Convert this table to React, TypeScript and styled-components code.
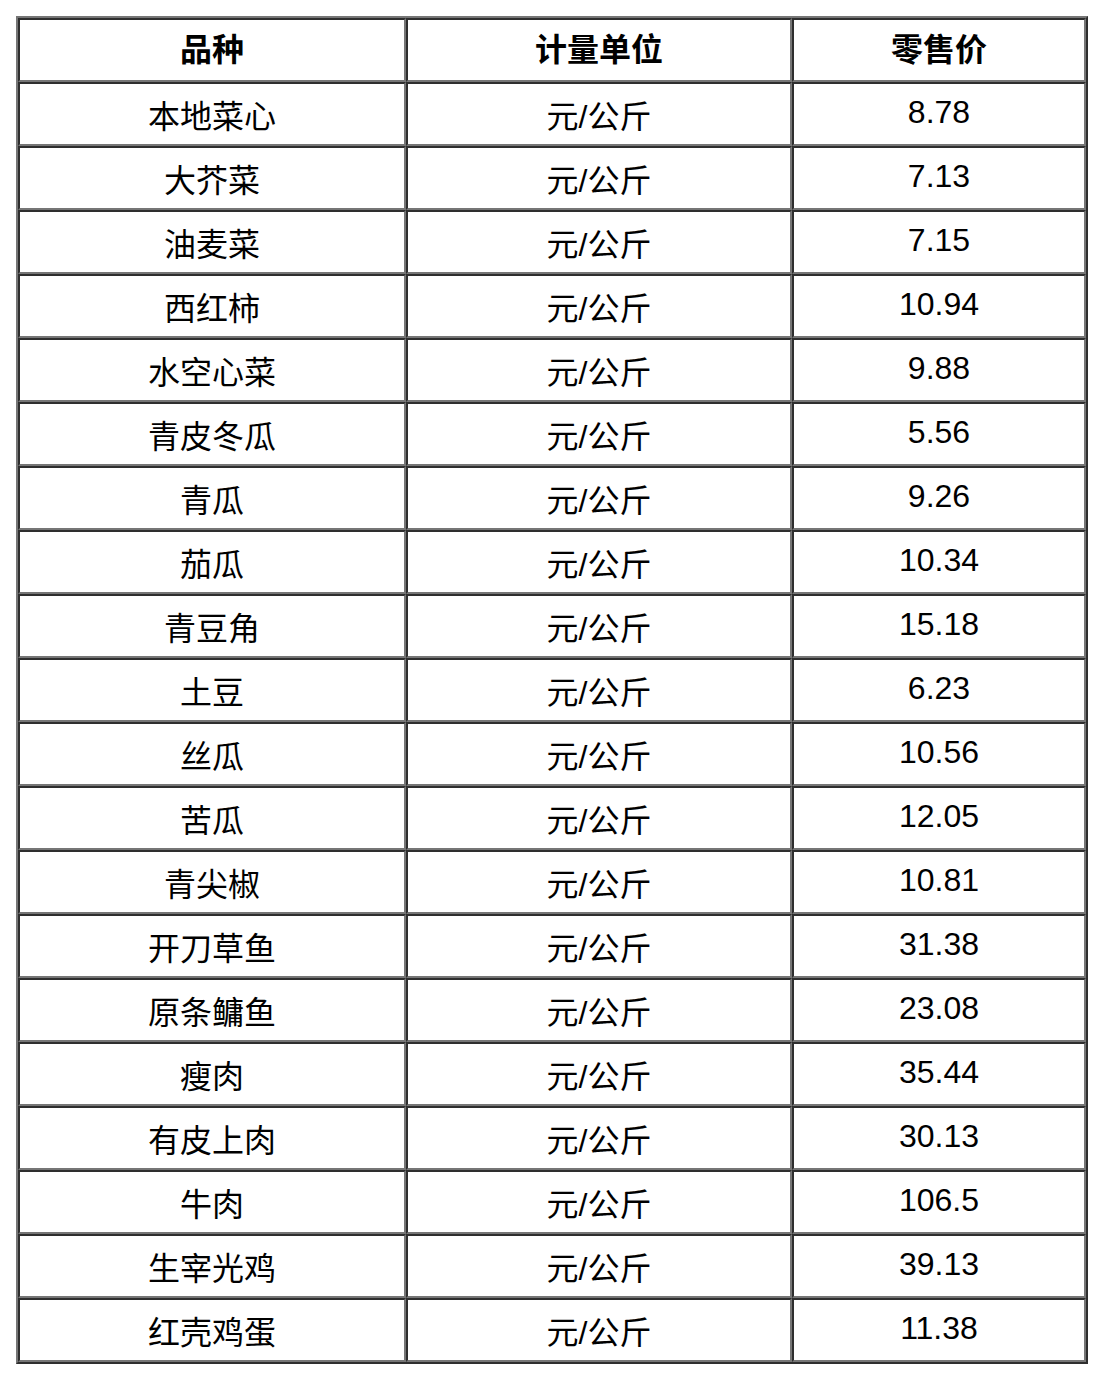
import React from "react";
import styled, { createGlobalStyle } from "styled-components";

const Global = createGlobalStyle`
  html, body { margin: 0; padding: 0; background: #fff; }
  body { padding: 16px; font-family: "Liberation Sans", "Noto Sans CJK SC", sans-serif; }
`;

const Table = styled.table`
  border-collapse: separate;
  border-spacing: 0;
  width: 1072px;
  border-style: solid;
  border-width: 2px;
  border-color: #767676 #2e2e2e #2e2e2e #767676;
  table-layout: fixed;
`;

const Cell = styled.td<{ $head?: boolean }>`
  height: ${(p) => (p.$head ? 60 : 54)}px;
  padding: ${(p) => (p.$head ? 0 : 6)}px 0 0;
  border-style: solid;
  border-width: 2px;
  border-color: #2e2e2e #767676 #767676 #2e2e2e;
  text-align: center;
  vertical-align: middle;
  font-size: 32px;
  line-height: 40px;
  color: #000;
  font-weight: ${(p) => (p.$head ? 700 : 400)};
`;

const Num = styled.span`
  position: relative;
  top: -5px;
`;

const rows: [string, string][] = [
  ["本地菜心", "8.78"],
  ["大芥菜", "7.13"],
  ["油麦菜", "7.15"],
  ["西红柿", "10.94"],
  ["水空心菜", "9.88"],
  ["青皮冬瓜", "5.56"],
  ["青瓜", "9.26"],
  ["茄瓜", "10.34"],
  ["青豆角", "15.18"],
  ["土豆", "6.23"],
  ["丝瓜", "10.56"],
  ["苦瓜", "12.05"],
  ["青尖椒", "10.81"],
  ["开刀草鱼", "31.38"],
  ["原条鳙鱼", "23.08"],
  ["瘦肉", "35.44"],
  ["有皮上肉", "30.13"],
  ["牛肉", "106.5"],
  ["生宰光鸡", "39.13"],
  ["红壳鸡蛋", "11.38"],
];

export default function App() {
  return (
    <>
      <Global />
      <Table>
        <colgroup>
          <col style={{ width: 388 }} />
          <col style={{ width: 386 }} />
          <col style={{ width: 294 }} />
        </colgroup>
        <tbody>
          <tr>
            <Cell $head>品种</Cell>
            <Cell $head>计量单位</Cell>
            <Cell $head>零售价</Cell>
          </tr>
          {rows.map(([name, price]) => (
            <tr key={name}>
              <Cell>{name}</Cell>
              <Cell>元/公斤</Cell>
              <Cell>
                <Num>{price}</Num>
              </Cell>
            </tr>
          ))}
        </tbody>
      </Table>
    </>
  );
}
